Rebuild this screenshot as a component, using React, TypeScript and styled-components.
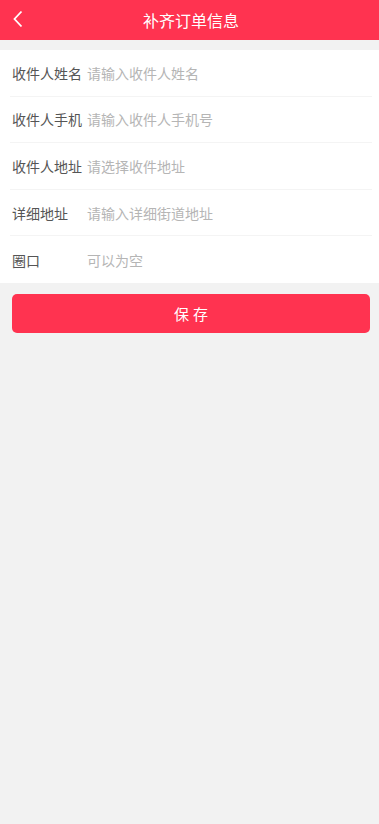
import React from "react";
import styled, { createGlobalStyle } from "styled-components";

const Global = createGlobalStyle`
  html, body { margin: 0; padding: 0; background: #f2f2f2; }
  body { font-family: "Noto Sans CJK SC", "Noto Sans", sans-serif; }
  * { box-sizing: border-box; }
`;

const Page = styled.div`
  min-height: 824px;
  background: #f2f2f2;
`;

const Header = styled.header`
  height: 40px;
  background: #ff3350;
  display: grid;
  grid-template-columns: 40px 1fr 40px;
  align-items: center;
  color: #fff;
`;

const Back = styled.div`
  display: flex;
  align-items: center;
  height: 40px;
  padding-left: 13px;
  padding-bottom: 2px;
`;

const Title = styled.h1`
  margin: 0;
  font-size: 16px;
  font-weight: 400;
  text-align: center;
  padding-left: 3px;
`;

const Form = styled.div`
  margin-top: 10px;
  background: #fff;
  padding: 0 7px 0 10px;
`;

const Row = styled.div<{ $last?: boolean }>`
  display: flex;
  align-items: center;
  height: 46.6px;
  border-bottom: ${(p) => (p.$last ? "none" : "1px solid #f4f4f4")};
  padding-left: 2px;
`;

const Label = styled.span`
  width: 76px;
  font-size: 14px;
  color: #555;
  flex-shrink: 0;
`;

const Placeholder = styled.span`
  font-size: 14px;
  color: #b5b5b5;
  margin-left: -1px;
`;

const SaveButton = styled.button`
  display: block;
  margin: 11px 9px 0 12px;
  width: calc(100% - 21px);
  height: 39px;
  border: none;
  border-radius: 5px;
  background: #ff3350;
  color: #fff;
  font-family: inherit;
  font-size: 15px;
  letter-spacing: 4px;
  padding: 0 0 0 4px;
`;

const rows = [
  ["收件人姓名", "请输入收件人姓名"],
  ["收件人手机", "请输入收件人手机号"],
  ["收件人地址", "请选择收件地址"],
  ["详细地址", "请输入详细街道地址"],
  ["圈口", "可以为空"],
];

export default function App() {
  return (
    <Page>
      <Global />
      <Header>
        <Back>
          <svg width="10" height="18" viewBox="0 0 10 18">
            <path d="M8.5 1.5 L1.5 9 L8.5 16.5" fill="none" stroke="#fff" strokeWidth="1.8" />
          </svg>
        </Back>
        <Title>补齐订单信息</Title>
        <div />
      </Header>
      <Form>
        {rows.map(([l, p], i) => (
          <Row key={l} $last={i === rows.length - 1}>
            <Label>{l}</Label>
            <Placeholder>{p}</Placeholder>
          </Row>
        ))}
      </Form>
      <SaveButton>保存</SaveButton>
    </Page>
  );
}
